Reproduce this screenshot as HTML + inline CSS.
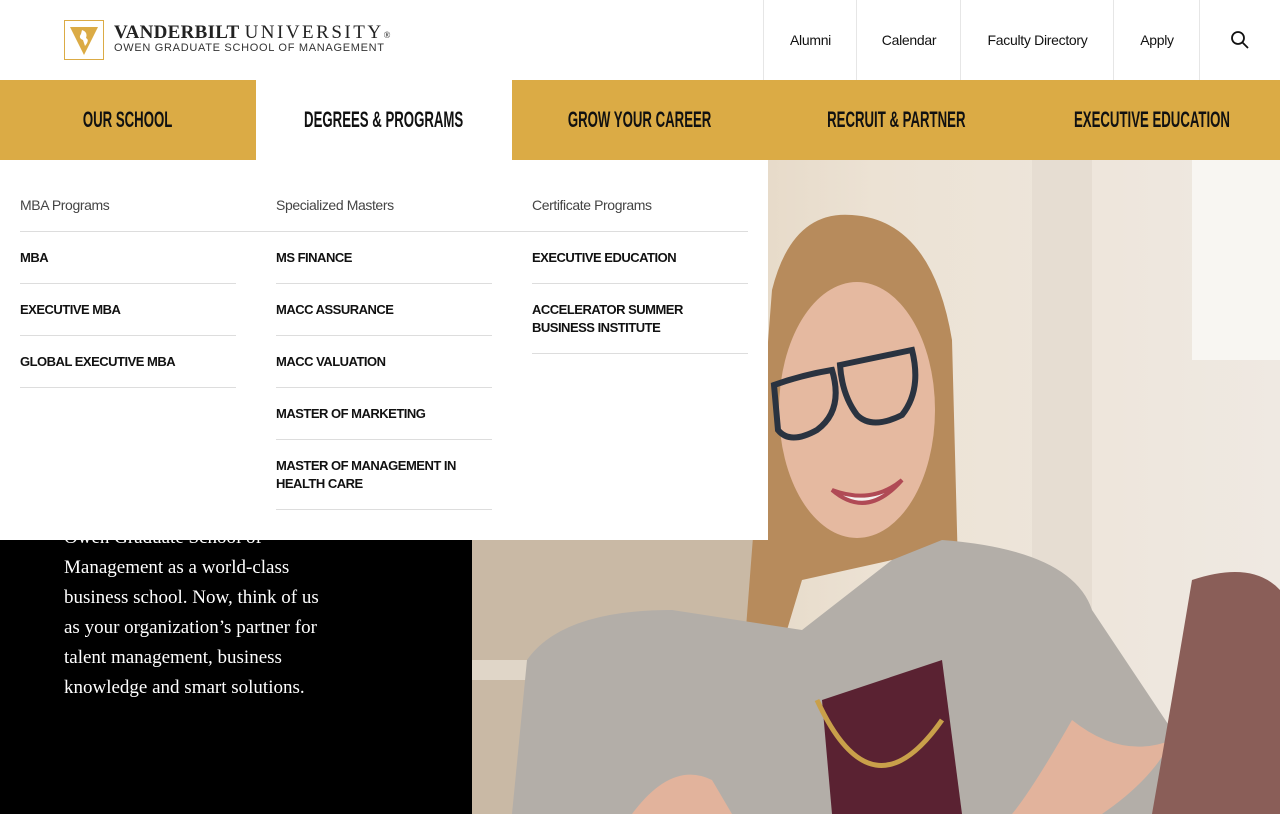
<!DOCTYPE html>
<html><head><meta charset="utf-8"><style>
*{margin:0;padding:0;box-sizing:border-box}
body{width:1280px;height:814px;overflow:hidden;position:relative;background:#000;font-family:"Liberation Sans",sans-serif}
.top{position:absolute;left:0;top:0;width:1280px;height:80px;background:#fff}
.util{position:absolute;top:0;height:80px;border-left:1px solid #e6e6e6;display:flex;align-items:center;justify-content:center;font-size:14px;color:#111;letter-spacing:-0.3px}
.nav{position:absolute;top:80px;left:0;width:1280px;height:80px;background:#dbab45}
.nav div{position:absolute;top:0;height:80px;width:256px;display:flex;align-items:center;justify-content:center;white-space:nowrap;font-weight:bold;font-size:22px;color:#111}
.nav span{display:inline-block;transform:scaleX(.6);white-space:nowrap}
.drop{position:absolute;left:0;top:160px;width:768px;height:380px;background:#fff}
.col{position:absolute;top:0;width:216px}
.h{height:72px;padding-top:37px;font-size:14px;color:#444;border-bottom:1px solid #ddd;letter-spacing:-0.4px}
.i{font-size:13px;font-weight:bold;color:#111;border-bottom:1px solid #ddd;padding:17px 0 16px;line-height:18px;letter-spacing:-0.5px}
.txt{position:absolute;left:64px;top:523px;width:268px;color:#fff;font-family:"Liberation Serif",serif;font-size:19px;line-height:30px}
</style></head><body>
<svg style="position:absolute;left:472px;top:160px" width="808" height="654" viewBox="0 0 808 654">
<defs><linearGradient id="bg" x1="0" x2="1"><stop offset="0" stop-color="#d9c7ad"/><stop offset=".5" stop-color="#ece2d4"/><stop offset="1" stop-color="#efe9e2"/></linearGradient></defs>
<rect width="808" height="654" fill="url(#bg)"/>
<rect x="720" y="0" width="88" height="200" fill="#f8f6f2"/>
<rect x="560" y="0" width="60" height="654" fill="#e6ddd2"/>
<rect x="0" y="380" width="300" height="274" fill="#c9b9a5"/>
<rect x="0" y="500" width="120" height="20" fill="#e0d6c8"/>
<path d="M300 130 Q320 50 380 55 Q460 60 480 180 L490 560 L440 560 L420 400 L330 420 L300 520 L270 520 Z" fill="#b78b5c"/>
<ellipse cx="385" cy="250" rx="78" ry="128" fill="#e5b9a0"/>
<path d="M302 225 Q330 215 360 210 Q372 250 345 270 Q318 285 306 270 Z M368 205 L440 190 Q450 230 430 255 Q400 270 385 255 Q370 235 368 205 Z" fill="none" stroke="#2a3340" stroke-width="6"/>
<path d="M360 330 Q395 360 430 320 Q400 345 360 330Z" fill="#f5f1ee" stroke="#b04a55" stroke-width="4"/>
<path d="M40 654 L55 500 Q90 450 200 450 L330 470 L420 400 L470 380 Q600 390 620 450 L720 600 L740 654 Z" fill="#b3aea8"/>
<path d="M350 540 L470 500 L490 654 L360 654 Z" fill="#5a2232"/>
<path d="M345 540 Q400 660 470 560" fill="none" stroke="#c9a04a" stroke-width="5"/>
<path d="M600 560 Q560 630 540 654 L630 654 Q680 620 700 580 Q650 600 600 560Z" fill="#e2b39c"/>
<path d="M160 654 Q200 600 240 620 L260 654Z" fill="#e2b39c"/>
<path d="M720 420 Q780 400 808 430 L808 654 L680 654 Q700 540 720 420Z" fill="#8a5e58"/>
</svg>
<div class="top">
<svg style="position:absolute;left:64px;top:20px" width="40" height="40" viewBox="0 0 40 40"><rect x="0.5" y="0.5" width="39" height="39" fill="#fff" stroke="#dbab45"/><path d="M6 7 H34 L20 35 Z" fill="#dbab45"/><path d="M18 10 Q24 12 22 18 Q26 20 21 26 L19 20 Q14 18 17 14Z" fill="#fff"/></svg>
<div style="position:absolute;left:114px;top:22px;font-family:'Liberation Serif',serif;font-size:19px;color:#222;letter-spacing:0.3px;white-space:nowrap"><b>VANDERBILT</b> <span style="letter-spacing:2.5px">UNIVERSITY</span><span style="font-size:9px">®</span></div>
<div style="position:absolute;left:114px;top:42px;font-size:11px;color:#333;letter-spacing:0.7px;white-space:nowrap">OWEN GRADUATE SCHOOL OF MANAGEMENT</div>
<div class="util" style="left:763px;width:94px">Alumni</div>
<div class="util" style="left:856px;width:105px">Calendar</div>
<div class="util" style="left:960px;width:154px">Faculty Directory</div>
<div class="util" style="left:1113px;width:87px">Apply</div>
<div class="util" style="left:1199px;width:81px"><svg width="20" height="20" viewBox="0 0 20 20"><circle cx="8" cy="8" r="6" fill="none" stroke="#111" stroke-width="1.8"/><path d="M12.5 12.5 L18 18" stroke="#111" stroke-width="1.8"/></svg></div>
</div>
<div class="nav">
<div style="left:0"><span>OUR SCHOOL</span></div>
<div style="left:256px;background:#fff"><span>DEGREES &amp; PROGRAMS</span></div>
<div style="left:512px"><span>GROW YOUR CAREER</span></div>
<div style="left:768px"><span>RECRUIT &amp; PARTNER</span></div>
<div style="left:1024px;width:256px"><span>EXECUTIVE EDUCATION</span></div>
</div>
<div class="txt">Owen Graduate School of Management as a world-class business school. Now, think of us as your organization’s partner for talent management, business knowledge and smart solutions.</div>
<div class="drop">
<div class="col" style="left:20px"><div class="h" style="width:256px">MBA Programs</div><div class="i">MBA</div><div class="i">EXECUTIVE MBA</div><div class="i">GLOBAL EXECUTIVE MBA</div></div>
<div class="col" style="left:276px"><div class="h" style="width:256px">Specialized Masters</div><div class="i">MS FINANCE</div><div class="i">MACC ASSURANCE</div><div class="i">MACC VALUATION</div><div class="i">MASTER OF MARKETING</div><div class="i">MASTER OF MANAGEMENT IN HEALTH CARE</div></div>
<div class="col" style="left:532px"><div class="h">Certificate Programs</div><div class="i">EXECUTIVE EDUCATION</div><div class="i">ACCELERATOR SUMMER BUSINESS INSTITUTE</div></div>
</div>
</body></html>
